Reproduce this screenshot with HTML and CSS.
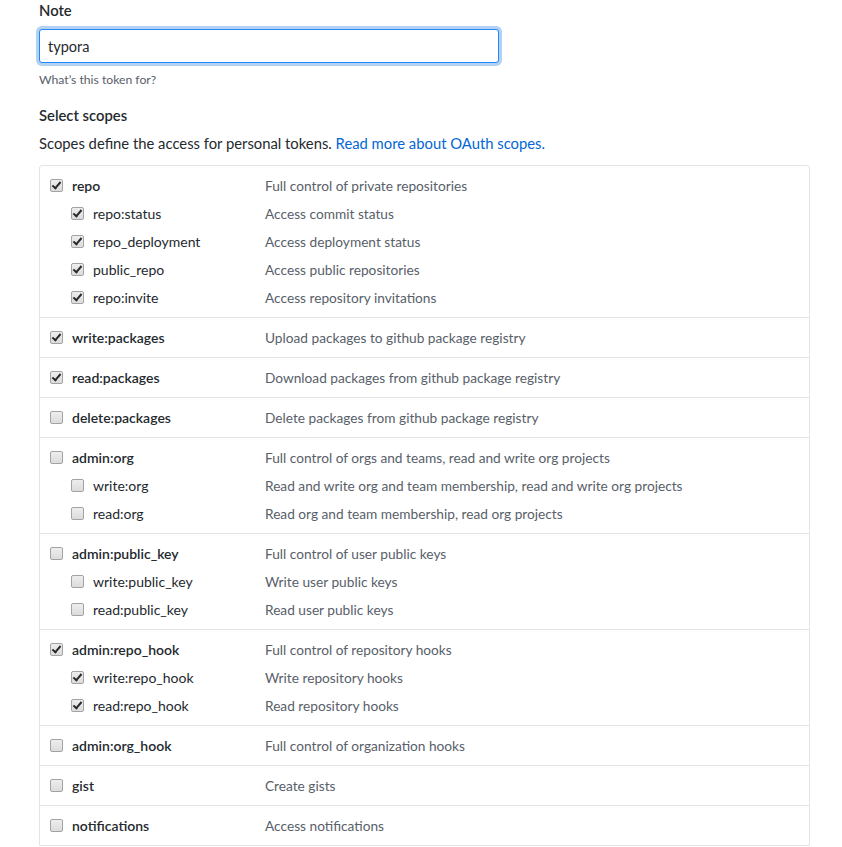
FILE: index.html
```html
<!DOCTYPE html>
<html lang="en">
<head>
  <meta charset="UTF-8">
  <meta name="viewport" content="width=device-width, initial-scale=1.0">
  <title>New personal access token</title>
  <link rel="stylesheet" href="styles.css">
</head>
<body>
  <div class="container">
    <form id="tokenForm">
      <div class="form-group">
        <label class="field-label" for="note">Note</label>
        <input type="text" id="note" class="form-control" value="typora">
        <p class="note">What’s this token for?</p>
      </div>

      <h3 class="section-title">Select scopes</h3>
      <p class="section-desc">Scopes define the access for personal tokens. <a href="#">Read more about OAuth scopes.</a></p>

      <div class="scopes">
        <div class="scope-group">
          <div class="scope-row"><label class="scope-name"><input type="checkbox" checked>repo</label><span class="scope-desc">Full control of private repositories</span></div>
          <div class="scope-row sub"><label class="scope-name"><input type="checkbox" checked>repo:status</label><span class="scope-desc">Access commit status</span></div>
          <div class="scope-row sub"><label class="scope-name"><input type="checkbox" checked>repo_deployment</label><span class="scope-desc">Access deployment status</span></div>
          <div class="scope-row sub"><label class="scope-name"><input type="checkbox" checked>public_repo</label><span class="scope-desc">Access public repositories</span></div>
          <div class="scope-row sub"><label class="scope-name"><input type="checkbox" checked>repo:invite</label><span class="scope-desc">Access repository invitations</span></div>
        </div>

        <div class="scope-group">
          <div class="scope-row"><label class="scope-name"><input type="checkbox" checked>write:packages</label><span class="scope-desc">Upload packages to github package registry</span></div>
        </div>

        <div class="scope-group">
          <div class="scope-row"><label class="scope-name"><input type="checkbox" checked>read:packages</label><span class="scope-desc">Download packages from github package registry</span></div>
        </div>

        <div class="scope-group">
          <div class="scope-row"><label class="scope-name"><input type="checkbox">delete:packages</label><span class="scope-desc">Delete packages from github package registry</span></div>
        </div>

        <div class="scope-group">
          <div class="scope-row"><label class="scope-name"><input type="checkbox">admin:org</label><span class="scope-desc">Full control of orgs and teams, read and write org projects</span></div>
          <div class="scope-row sub"><label class="scope-name"><input type="checkbox">write:org</label><span class="scope-desc">Read and write org and team membership, read and write org projects</span></div>
          <div class="scope-row sub"><label class="scope-name"><input type="checkbox">read:org</label><span class="scope-desc">Read org and team membership, read org projects</span></div>
        </div>

        <div class="scope-group">
          <div class="scope-row"><label class="scope-name"><input type="checkbox">admin:public_key</label><span class="scope-desc">Full control of user public keys</span></div>
          <div class="scope-row sub"><label class="scope-name"><input type="checkbox">write:public_key</label><span class="scope-desc">Write user public keys</span></div>
          <div class="scope-row sub"><label class="scope-name"><input type="checkbox">read:public_key</label><span class="scope-desc">Read user public keys</span></div>
        </div>

        <div class="scope-group">
          <div class="scope-row"><label class="scope-name"><input type="checkbox" checked>admin:repo_hook</label><span class="scope-desc">Full control of repository hooks</span></div>
          <div class="scope-row sub"><label class="scope-name"><input type="checkbox" checked>write:repo_hook</label><span class="scope-desc">Write repository hooks</span></div>
          <div class="scope-row sub"><label class="scope-name"><input type="checkbox" checked>read:repo_hook</label><span class="scope-desc">Read repository hooks</span></div>
        </div>

        <div class="scope-group">
          <div class="scope-row"><label class="scope-name"><input type="checkbox">admin:org_hook</label><span class="scope-desc">Full control of organization hooks</span></div>
        </div>

        <div class="scope-group">
          <div class="scope-row"><label class="scope-name"><input type="checkbox">gist</label><span class="scope-desc">Create gists</span></div>
        </div>

        <div class="scope-group">
          <div class="scope-row"><label class="scope-name"><input type="checkbox">notifications</label><span class="scope-desc">Access notifications</span></div>
        </div>
      </div>
    </form>
  </div>
</body>
</html>
```

FILE: styles.css
```css
body {
  font-family: Lato, "Liberation Sans", sans-serif;
  font-size: 14px;
  line-height: 1.5;
  color: #24292e;
  background-color: #fff;
  margin: 0;
  padding: 0;
}
.container {
  padding: 0 32px 0 39px;
}
.form-group {
  margin: 0;
}
.field-label {
  display: block;
  font-size: 14.8px;
  font-weight: 600;
  line-height: 21px;
  margin-bottom: 8px;
}
.form-control {
  display: block;
  box-sizing: border-box;
  width: 460px;
  height: 34px;
  padding: 6px 8px;
  font-family: inherit;
  font-size: 14.5px;
  line-height: 20px;
  color: #24292e;
  border: 1px solid #2188ff;
  border-radius: 3px;
  box-shadow: 0 0 0 3px rgba(3, 102, 214, 0.3);
  outline: none;
}
.note {
  margin: 8px 0 0;
  font-size: 12.2px;
  line-height: 18px;
  color: #586069;
}
.section-title {
  margin: 16px 0 0;
  font-size: 14.8px;
  font-weight: 600;
  line-height: 21px;
}
.section-desc {
  margin: 7px 0 0;
  font-size: 14.8px;
  line-height: 21px;
}
.section-desc a {
  color: #0366d6;
  text-decoration: none;
}
.scopes {
  margin-top: 11px;
  border: 1px solid #e1e4e8;
  border-bottom-color: #e1e4e8;
  border-radius: 3px 3px 0 0;
}
.scope-group {
  padding: 10px 10px 9px;
  border-top: 1px solid #e1e4e8;
}
.scope-group:first-child {
  border-top: none;
}
.scope-row {
  display: flex;
  line-height: 20px;
}
.scope-row.sub {
  margin-top: 8px;
  padding-left: 21px;
}
.scope-name {
  display: flex;
  align-items: center;
  width: 215px;
  font-weight: 600;
}
.scope-row.sub .scope-name {
  width: 194px;
  font-weight: normal;
}
.scope-desc {
  font-size: 13.7px;
  color: #586069;
}
.scope-name input {
  appearance: none;
  -webkit-appearance: none;
  position: relative;
  box-sizing: border-box;
  width: 13px;
  height: 13px;
  margin: -2px 9px 0 0;
  border: 1px solid #a3a3a3;
  border-radius: 2px;
  background: linear-gradient(#ededed, #dcdcdc);
}
.scope-name input:checked::after {
  content: "";
  position: absolute;
  left: 3px;
  top: 0px;
  width: 3px;
  height: 7px;
  border: solid #2b2b2b;
  border-width: 0 2.5px 2.5px 0;
  transform: rotate(40deg);
}
```
